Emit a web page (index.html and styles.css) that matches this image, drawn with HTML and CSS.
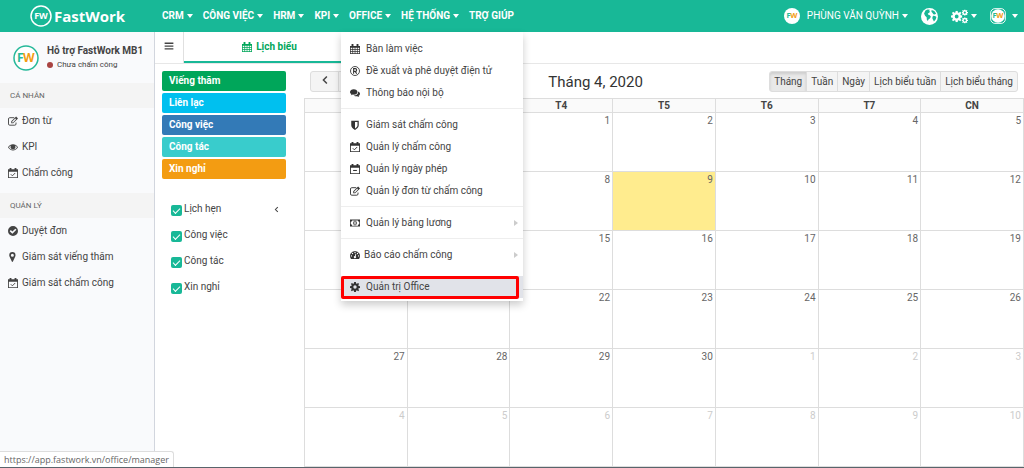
FILE: index.html
```
<!DOCTYPE html>
<html lang="vi">
<head>
    <meta charset="UTF-8">
    <meta name="viewport" content="width=device-width, initial-scale=1.0">
    <title>FastWork - Lịch biểu</title>
    <link rel="stylesheet" href="styles.css">
</head>
<body>
    <svg class="sprite" aria-hidden="true">
        <symbol id="i-calendar" viewBox="0 0 16 16">
            <path fill-rule="evenodd" d="M0 3h2.500V0h3v3h5V0h3v3H16v13H0zM1.200 6v2.300h2.600V6zM5 6v2.300h2.500V6zM8.600 6v2.300h2.500V6zM12.200 6v2.300h2.600V6zM1.200 9.400v2.200h2.600V9.400zM5 9.400v2.200h2.500V9.400zM8.600 9.400v2.200h2.500V9.400zM12.200 9.400v2.200h2.600V9.400zM1.200 12.700v2.100h2.600v-2.100zM5 12.700v2.100h2.500v-2.100zM8.600 12.700v2.100h2.500v-2.100zM12.200 12.700v2.100h2.600v-2.100z"/>
        </symbol>
        <symbol id="i-calendar-check" viewBox="0 0 16 16">
            <path fill-rule="evenodd" d="M0 2h2.500V0h3v2h5V0h3v2H16v14H0zM1.400 6v8.600h13.200V6z"/>
            <path d="M4.500 10l2.500 2.500 4.500-4.500" fill="none" stroke="currentColor" stroke-width="1.500"/>
        </symbol>
        <symbol id="i-calendar-minus" viewBox="0 0 16 16">
            <path fill-rule="evenodd" d="M0 2h2.500V0h3v2h5V0h3v2H16v14H0zM1.400 6v8.600h13.200V6z"/>
            <path d="M5 9.500h6v1.700H5z"/>
        </symbol>
        <symbol id="i-registered" viewBox="0 0 16 16">
            <circle cx="8" cy="8" r="7.200" fill="none" stroke="currentColor" stroke-width="1.400"/>
            <path d="M5.800 12.400V4.200h2.700a2.200 2.200 0 0 1 0 4.400H5.800M8.400 8.600l2.300 3.800" fill="none" stroke="currentColor" stroke-width="1.700"/>
        </symbol>
        <symbol id="i-comments" viewBox="0 0 16 16">
            <path d="M6 2c3.400 0 6 1.900 6 4.300s-2.600 4.300-6 4.300c-.6 0-1.100 0-1.600-.1-.9.700-2 1.100-3.200 1.200.6-.6 1-1.200 1.100-2C.9 8.900 0 7.700 0 6.300 0 3.900 2.600 2 6 2z"/>
            <path d="M13.100 5.400c1.700.7 2.900 2 2.900 3.600 0 1.300-.9 2.500-2.300 3.300.1.800.5 1.400 1.100 2-1.200-.1-2.300-.5-3.200-1.200-2.100.3-4.200-.2-5.500-1.300 3.900.1 7.300-2.300 7-6.400z"/>
        </symbol>
        <symbol id="i-shield" viewBox="0 0 16 16">
            <path fill-rule="evenodd" d="M2 1h12v7.500c0 3.300-3 5.800-6 7.500-3-1.700-6-4.200-6-7.500zM8 3v10.700c2.200-1.400 4-3.200 4-5.200V3z"/>
        </symbol>
        <symbol id="i-edit" viewBox="0 0 16 16">
            <path d="M10 2.700H2.800A2 2 0 0 0 .8 4.700V12.700a2 2 0 0 0 2 2h8a2 2 0 0 0 2-2V10.500" fill="none" stroke="currentColor" stroke-width="1.500"/>
            <path fill-rule="evenodd" d="M13 .8l3 3L8.300 11.500H5.200V8.500zM6.700 8.800v1.400h1.400l4.800-4.900-1.300-1.300z"/>
        </symbol>
        <symbol id="i-eye" viewBox="0 0 16 16">
            <path fill-rule="evenodd" d="M0 8.500C1.800 5.500 4.700 3.500 8 3.500s6.200 2 8 5c-1.800 3-4.700 5-8 5s-6.200-2-8-5zM1.500 8.500C3 10.900 5.300 12.300 8 12.300s5-1.400 6.500-3.800c-.8-1.300-1.900-2.400-3.100-3A4 4 0 1 1 4.600 5.500c-1.200.6-2.300 1.700-3.100 3z"/>
            <circle cx="8" cy="7.700" r="3.200"/>
        </symbol>
        <symbol id="i-check-circle" viewBox="0 0 16 16">
            <path fill-rule="evenodd" d="M8 0a8 8 0 1 1 0 16A8 8 0 0 1 8 0zM11.700 4.200L7 8.900 4.500 6.400 2.700 8.200 7 12.500l6.500-6.500z"/>
        </symbol>
        <symbol id="i-marker" viewBox="0 0 16 16">
            <path fill-rule="evenodd" d="M7 0a5 5 0 0 1 5 5c0 1-.2 1.700-.6 2.500L7.900 15.200c-.4.900-1.400.9-1.800 0L2.600 7.500C2.200 6.700 2 6 2 5a5 5 0 0 1 5-5zM7 2.700a2.400 2.400 0 1 0 0 4.800 2.400 2.400 0 0 0 0-4.800z"/>
        </symbol>
        <symbol id="i-money" viewBox="0 0 16 16">
            <path fill-rule="evenodd" d="M0 2.500h16v11H0zM3.300 3.800A2.200 2.200 0 0 1 1.200 5.900v4.200a2.200 2.200 0 0 1 2.100 2.100h9.400a2.200 2.200 0 0 1 2.100-2.100V5.900a2.200 2.200 0 0 1-2.100-2.100z"/>
            <ellipse cx="8" cy="8" rx="2.500" ry="3.200" fill="none" stroke="currentColor" stroke-width="1.200"/>
            <path d="M7.500 6.300h1v3.400h-1z"/>
        </symbol>
        <symbol id="i-gauge" viewBox="0 0 16 16">
            <path fill-rule="evenodd" d="M8 1.500a8 8 0 0 1 6.700 12.300l-.6.400H1.900l-.6-.4A8 8 0 0 1 8 1.500zM8 2.900a1.100 1.100 0 1 0 0 2.200 1.100 1.100 0 0 0 0-2.200zM4 4.500a1.100 1.100 0 1 0 0 2.200 1.100 1.100 0 0 0 0-2.200zM12 4.500a1.100 1.100 0 1 0 0 2.200 1.100 1.100 0 0 0 0-2.200zM2.300 8.400a1.100 1.100 0 1 0 0 2.200 1.100 1.100 0 0 0 0-2.200zM13.700 8.400a1.100 1.100 0 1 0 0 2.200 1.100 1.100 0 0 0 0-2.200zM8.800 6l-1 3.500a1.800 1.800 0 1 0 1.300.4l1-3.500z"/>
        </symbol>
        <symbol id="i-cog" viewBox="0 0 16 16">
            <path fill-rule="evenodd" d="M6.600 0h2.800l.4 2.200 1.300.5L13 1.400 14.600 3l-1.300 1.900.5 1.300 2.200.4v2.800l-2.200.4-.5 1.300 1.300 1.900-1.600 1.600-1.900-1.300-1.300.5-.4 2.200H6.600l-.4-2.200-1.300-.5L3 14.600 1.400 13l1.300-1.900-.5-1.300L0 9.400V6.600l2.200-.4.5-1.300L1.400 3 3 1.400l1.900 1.300 1.300-.5zM8 5.300a2.700 2.700 0 1 0 0 5.400 2.700 2.700 0 0 0 0-5.400z"/>
        </symbol>
        <symbol id="i-cogs" viewBox="0 0 24 20">
            <use href="#i-cog" x="0" y="2" width="16" height="16"/>
            <use href="#i-cog" x="15" y="0" width="9" height="9"/>
            <use href="#i-cog" x="15" y="11" width="9" height="9"/>
        </symbol>
        <symbol id="i-globe" viewBox="0 0 16 16">
            <circle cx="8" cy="8" r="8"/>
            <path fill="#18b897" d="M4.200 2.300l2-.9 2.200.3-.8 1.200 1 .6-1.200 1.100-1 .5.500 1.300 1.400.5 1 1.400-.9 1.500-1.200.8-.8 1.700-.9-1.300-.2-2.200-1.500-1.400-.9-2.300zM10 1.900l2.500 1 1.700 2.300-1.200.8-1.400-.2-.9-1.400-.9-.9zM11.300 7.400l1.900.1 1.300 1-.6 2.200-1.700 1.900-.9-1.500-.7-1.800z"/>
        </symbol>
        <symbol id="i-bars" viewBox="0 0 16 16">
            <path d="M1 2.500h14v2.200H1zM1 7h14v2.200H1zM1 11.500h14v2.200H1z"/>
        </symbol>
        <symbol id="i-left" viewBox="0 0 16 16">
            <path d="M11 2.500L5.500 8l5.500 5.500" fill="none" stroke="currentColor" stroke-width="2.400"/>
        </symbol>
        <symbol id="i-right" viewBox="0 0 16 16">
            <path d="M5 2.500L10.500 8 5 13.500" fill="none" stroke="currentColor" stroke-width="2.400"/>
        </symbol>
    </svg>

    <header class="topbar">
        <a class="brand" href="#">
            <svg class="brand-mark" viewBox="0 0 22 22" aria-hidden="true">
                <circle cx="11" cy="11" r="10" fill="none" stroke="#fff" stroke-width="1.500"/>
                <text x="11" y="14" class="brand-fw">FW</text>
            </svg>
            <span>FastWork</span>
        </a>
        <nav class="main-nav">
            <ul>
                <li><a class="caret" href="#">CRM</a></li>
                <li><a class="caret" href="#">CÔNG VIỆC</a></li>
                <li><a class="caret" href="#">HRM</a></li>
                <li><a class="caret" href="#">KPI</a></li>
                <li class="open">
                    <a class="caret" href="#">OFFICE</a>
                    <ul class="dropdown">
                        <li><a href="#"><svg class="icon"><use href="#i-calendar"/></svg>Bàn làm việc</a></li>
                        <li><a href="#"><svg class="icon"><use href="#i-registered"/></svg>Đề xuất và phê duyệt điện tử</a></li>
                        <li><a href="#"><svg class="icon"><use href="#i-comments"/></svg>Thông báo nội bộ</a></li>
                        <li class="divider"></li>
                        <li><a href="#"><svg class="icon"><use href="#i-shield"/></svg>Giám sát chấm công</a></li>
                        <li><a href="#"><svg class="icon"><use href="#i-calendar-check"/></svg>Quản lý chấm công</a></li>
                        <li><a href="#"><svg class="icon"><use href="#i-calendar-minus"/></svg>Quản lý ngày phép</a></li>
                        <li><a href="#"><svg class="icon"><use href="#i-edit"/></svg>Quản lý đơn từ chấm công</a></li>
                        <li class="divider"></li>
                        <li><a class="has-sub" href="#"><svg class="icon"><use href="#i-money"/></svg>Quản lý bảng lương</a></li>
                        <li class="divider"></li>
                        <li><a class="has-sub tight" href="#"><svg class="icon"><use href="#i-gauge"/></svg>Báo cáo chấm công</a></li>
                        <li class="divider blank"></li>
                        <li class="marked"><a href="#"><svg class="icon"><use href="#i-cog"/></svg>Quản trị Office</a></li>
                    </ul>
                </li>
                <li><a class="caret" href="#">HỆ THỐNG</a></li>
                <li><a href="#">TRỢ GIÚP</a></li>
            </ul>
        </nav>
        <div class="user-nav">
            <a class="caret user-name" href="#">
                <svg class="avatar-sm" viewBox="0 0 26 26" aria-hidden="true">
                    <circle cx="13" cy="13" r="13" fill="#fff"/>
                    <text x="4" y="17" class="logo-f">F</text>
                    <text x="10" y="17" class="logo-w">W</text>
                </svg>
                PHÙNG VĂN QUỲNH
            </a>
            <a href="#" aria-label="Ngôn ngữ"><svg class="icon-lg"><use href="#i-globe"/></svg></a>
            <a class="caret" href="#" aria-label="Cài đặt"><svg class="icon-lg"><use href="#i-cogs"/></svg></a>
            <a class="caret company" href="#" aria-label="Công ty">
                <svg class="avatar-sm" viewBox="0 0 26 26" aria-hidden="true">
                    <rect x="1" y="1" width="24" height="24" rx="7" fill="none" stroke="#fff" stroke-width="1.500"/>
                    <circle cx="13" cy="13" r="11" fill="#fff"/>
                    <text x="4" y="17" class="logo-f">F</text>
                    <text x="10" y="17" class="logo-w">W</text>
                </svg>
            </a>
        </div>
    </header>

    <div class="page">
        <aside class="sidebar">
            <div class="user-panel">
                <svg class="avatar" viewBox="0 0 26 26" aria-hidden="true">
                    <circle cx="13" cy="13" r="12" fill="#fff" stroke="#26b99a" stroke-width="1.500"/>
                    <text x="4" y="17" class="logo-f">F</text>
                    <text x="10" y="17" class="logo-w">W</text>
                </svg>
                <div>
                    <div class="panel-name">Hỗ trợ FastWork MB1</div>
                    <div class="panel-status">Chưa chấm công</div>
                </div>
            </div>
            <h2>CÁ NHÂN</h2>
            <ul>
                <li><a href="#"><svg class="icon"><use href="#i-edit"/></svg>Đơn từ</a></li>
                <li><a href="#"><svg class="icon"><use href="#i-eye"/></svg>KPI</a></li>
                <li><a href="#"><svg class="icon"><use href="#i-calendar-check"/></svg>Chấm công</a></li>
            </ul>
            <h2>QUẢN LÝ</h2>
            <ul>
                <li><a href="#"><svg class="icon"><use href="#i-check-circle"/></svg>Duyệt đơn</a></li>
                <li><a href="#"><svg class="icon"><use href="#i-marker"/></svg>Giám sát viếng thăm</a></li>
                <li><a href="#"><svg class="icon"><use href="#i-calendar-check"/></svg>Giám sát chấm công</a></li>
            </ul>
        </aside>

        <main class="main">
            <div class="tabs">
                <button class="toggle" type="button" aria-label="Thu gọn"><svg class="icon"><use href="#i-bars"/></svg></button>
                <a class="tab" href="#"><svg class="icon"><use href="#i-calendar"/></svg>Lịch biểu</a>
            </div>

            <div class="content">
                <div class="filters">
                    <div class="labels">
                        <div class="label green">Viếng thăm</div>
                        <div class="label aqua">Liên lạc</div>
                        <div class="label blue">Công việc</div>
                        <div class="label teal">Công tác</div>
                        <div class="label orange">Xin nghỉ</div>
                    </div>
                    <div class="checks">
                        <label><input type="checkbox" checked>Lịch hẹn<svg class="more"><use href="#i-left"/></svg></label>
                        <label><input type="checkbox" checked>Công việc</label>
                        <label><input type="checkbox" checked>Công tác</label>
                        <label><input type="checkbox" checked>Xin nghỉ</label>
                    </div>
                </div>

                <section class="calendar">
                    <div class="toolbar">
                        <div class="tools">
                            <div class="group">
                                <button class="arrow" type="button" aria-label="Trước"><svg class="icon"><use href="#i-left"/></svg></button>
                                <button class="arrow" type="button" aria-label="Sau"><svg class="icon"><use href="#i-right"/></svg></button>
                            </div>
                        </div>
                        <h1>Tháng 4, 2020</h1>
                        <div class="group">
                            <button class="active" type="button">Tháng</button>
                            <button type="button">Tuần</button>
                            <button type="button">Ngày</button>
                            <button type="button">Lịch biểu tuần</button>
                            <button type="button">Lịch biểu tháng</button>
                        </div>
                    </div>
                    <table>
                        <thead>
                            <tr><th>T2</th><th>T3</th><th>T4</th><th>T5</th><th>T6</th><th>T7</th><th>CN</th></tr>
                        </thead>
                        <tbody>
                            <tr><td class="other"></td><td class="other"></td><td>1</td><td>2</td><td>3</td><td>4</td><td>5</td></tr>
                            <tr><td>6</td><td>7</td><td>8</td><td class="today">9</td><td>10</td><td>11</td><td>12</td></tr>
                            <tr><td>13</td><td>14</td><td>15</td><td>16</td><td>17</td><td>18</td><td>19</td></tr>
                            <tr><td>20</td><td>21</td><td>22</td><td>23</td><td>24</td><td>25</td><td>26</td></tr>
                            <tr><td>27</td><td>28</td><td>29</td><td>30</td><td class="other">1</td><td class="other">2</td><td class="other">3</td></tr>
                            <tr><td class="other">4</td><td class="other">5</td><td class="other">6</td><td class="other">7</td><td class="other">8</td><td class="other">9</td><td class="other">10</td></tr>
                        </tbody>
                    </table>
                </section>
            </div>
        </main>
    </div>

    <div class="link-status">https://app.fastwork.vn/office/manager</div>
</body>
</html>
```
FILE: styles.css
```
* {
    box-sizing: border-box;
}

body {
    margin: 0;
    min-height: 100vh;
    display: flex;
    flex-direction: column;
    font-family: Roboto, "Liberation Sans", sans-serif;
    font-size: 10px;
    line-height: 14px;
    color: #444;
    background: #fff;
    border-bottom: 1px solid #59646b;
}

ul {
    list-style: none;
    margin: 0;
    padding: 0;
}

a {
    color: inherit;
    text-decoration: none;
}

button {
    font: inherit;
    color: inherit;
    cursor: pointer;
}

svg {
    fill: currentColor;
    flex: none;
}

.sprite {
    position: absolute;
    width: 0;
    height: 0;
}

.icon {
    width: 10px;
    height: 10px;
}

/* top bar */
.topbar {
    display: flex;
    align-items: center;
    height: 32px;
    background: #18b897;
    color: #fff;
}

.brand {
    display: flex;
    align-items: center;
    gap: 2px;
    width: 157px;
    padding-left: 30px;
    font: bold 15px "Open Sans", "Noto Sans", sans-serif;
}

.brand-mark {
    width: 22px;
    height: 22px;
}

.brand-fw {
    font: bold 9px "Open Sans", sans-serif;
    text-anchor: middle;
}

.logo-f,
.logo-w {
    font: bold 12px "Open Sans", sans-serif;
    fill: #26b99a;
}

.logo-w {
    fill: #f39c12;
}

.main-nav > ul {
    display: flex;
    font-weight: bold;
}

.main-nav > ul > li {
    position: relative;
    padding: 0 5px;
    line-height: 32px;
}

.caret {
    display: flex;
    align-items: center;
    gap: 3px;
}

.caret::after {
    content: "";
    border: 3px solid transparent;
    border-top: 4px solid #fff;
    border-bottom: 0;
}

.user-nav {
    display: flex;
    align-items: center;
    gap: 13px;
    margin-left: auto;
    padding-right: 6px;
}

.user-name .avatar-sm {
    margin-right: 4px;
}

.company {
    gap: 6px;
}

.avatar-sm {
    width: 16px;
    height: 16px;
}

.icon-lg {
    display: block;
    width: 17px;
    height: 17px;
}

/* office menu */
.dropdown {
    position: absolute;
    z-index: 10;
    top: 32px;
    left: -3px;
    width: 182px;
    padding: 6px 0 3px;
    background: #fff;
    color: #444;
    font-weight: normal;
    box-shadow: 0 4px 8px rgba(0, 0, 0, 0.2);
}

.dropdown a {
    display: flex;
    align-items: center;
    gap: 6px;
    height: 22px;
    padding: 0 5px 0 9px;
}

.dropdown .icon {
    color: #333;
}

.dropdown .tight {
    gap: 4px;
}

.divider {
    height: 1px;
    margin: 4px 0 5px;
    background: #eee;
}

.divider.blank {
    background: none;
}

.has-sub::after {
    content: "";
    margin-left: auto;
    border: 3px solid transparent;
    border-left: 4px solid #ccc;
    border-right: 0;
}

.marked {
    position: relative;
    background: #e1e3e9;
}

.marked::after {
    content: "";
    position: absolute;
    inset: 0 4px -1px 0;
    border: 3px solid #f00;
    border-radius: 2px;
}

/* sidebar */
.page {
    display: flex;
    flex: 1;
}

.sidebar {
    width: 155px;
    flex: none;
    background: #f9fafc;
    border-right: 1px solid #d2d6de;
}

.user-panel {
    display: flex;
    align-items: center;
    gap: 8px;
    height: 51px;
    padding-left: 13px;
}

.avatar {
    width: 26px;
    height: 26px;
}

.panel-name {
    font-weight: bold;
}

.panel-status {
    display: flex;
    align-items: center;
    gap: 4px;
    font-size: 8px;
}

.panel-status::before {
    content: "";
    width: 6px;
    height: 6px;
    border-radius: 50%;
    background: #a94442;
}

.sidebar h2 {
    margin: 0;
    padding: 0 10px;
    font-size: 8px;
    font-weight: normal;
    line-height: 25px;
    color: #666;
    background: #f4f4f4;
}

.sidebar ul {
    padding-bottom: 7px;
}

.sidebar li a {
    display: flex;
    align-items: center;
    gap: 4px;
    height: 26px;
    padding-left: 8px;
}

/* tabs */
.main {
    flex: 1;
    min-width: 0;
}

.tabs {
    display: flex;
    height: 32px;
    border-bottom: 1px solid #e7e7e7;
}

.toggle {
    width: 29px;
    padding: 0;
    border: 0;
    border-right: 1px solid #e0e0e0;
    background: #fff;
}

.tab {
    display: flex;
    align-items: center;
    justify-content: center;
    gap: 4px;
    width: 171px;
    font-weight: bold;
    color: #00a65a;
    border-bottom: 2px solid #18b897;
}

/* filters */
.content {
    display: flex;
    gap: 18px;
    padding: 7px 0 0 7px;
}

.filters {
    width: 124px;
    flex: none;
}

.labels {
    display: grid;
    gap: 2px;
}

.label {
    padding: 0 7px;
    line-height: 20px;
    font-weight: bold;
    color: #fff;
    border-radius: 2px;
}

.green { background: #00a65a; }
.aqua { background: #00c0ef; }
.blue { background: #337ab7; }
.teal { background: #39cccc; }
.orange { background: #f39c12; }

.checks {
    padding: 17px 6px 0 9px;
}

.checks label {
    display: flex;
    align-items: center;
    gap: 2px;
    height: 26px;
}

.checks input {
    appearance: none;
    width: 11px;
    height: 11px;
    margin: 2px 0 0;
    border-radius: 2px;
    background: #18b897;
    display: grid;
    place-items: center;
}

.checks input:checked::after {
    content: "";
    width: 6px;
    height: 3px;
    border: solid #fff;
    border-width: 0 0 1px 1px;
    transform: rotate(-45deg);
}

.more {
    width: 7px;
    height: 7px;
    margin-left: auto;
}

/* calendar */
.calendar {
    flex: 1;
    min-width: 0;
}

.toolbar {
    display: flex;
    align-items: center;
    justify-content: space-between;
    padding: 0 6px 6px;
}

.toolbar h1 {
    margin: 0;
    font-size: 15px;
    font-weight: normal;
    line-height: 20px;
    color: #333;
}

.tools {
    width: 112px;
}

.group {
    display: flex;
}

.group button {
    height: 21px;
    margin-left: -1px;
    padding: 0 4px;
    border: 1px solid #ddd;
    background: #f4f4f4;
}

.group button:first-child {
    margin-left: 0;
    border-radius: 3px 0 0 3px;
}

.group button:last-child {
    border-radius: 0 3px 3px 0;
}

.group .arrow {
    width: 29px;
}

.group .active {
    background: #e9e9e9;
    box-shadow: inset 0 2px 3px rgba(0, 0, 0, 0.12);
}

.calendar table {
    width: 100%;
    table-layout: fixed;
    border-collapse: collapse;
}

.calendar th,
.calendar td {
    padding: 0 2px;
    border: 1px solid #ddd;
}

.calendar th {
    height: 14px;
    line-height: 13px;
    background: #fafafa;
}

.calendar td {
    height: 59px;
    text-align: right;
    vertical-align: top;
    line-height: 16px;
    color: #666;
}

.calendar .other {
    color: #ccc;
}

.calendar .today {
    background: #ffec8e;
}

/* link preview */
.link-status {
    position: fixed;
    left: 0;
    bottom: 1px;
    padding: 0 4px;
    font: 9px/15px "Open Sans", "Noto Sans", sans-serif;
    color: #666;
    background: #fff;
    border: 1px solid #ddd;
    border-width: 1px 1px 0 0;
    border-radius: 0 3px 0 0;
}
```
